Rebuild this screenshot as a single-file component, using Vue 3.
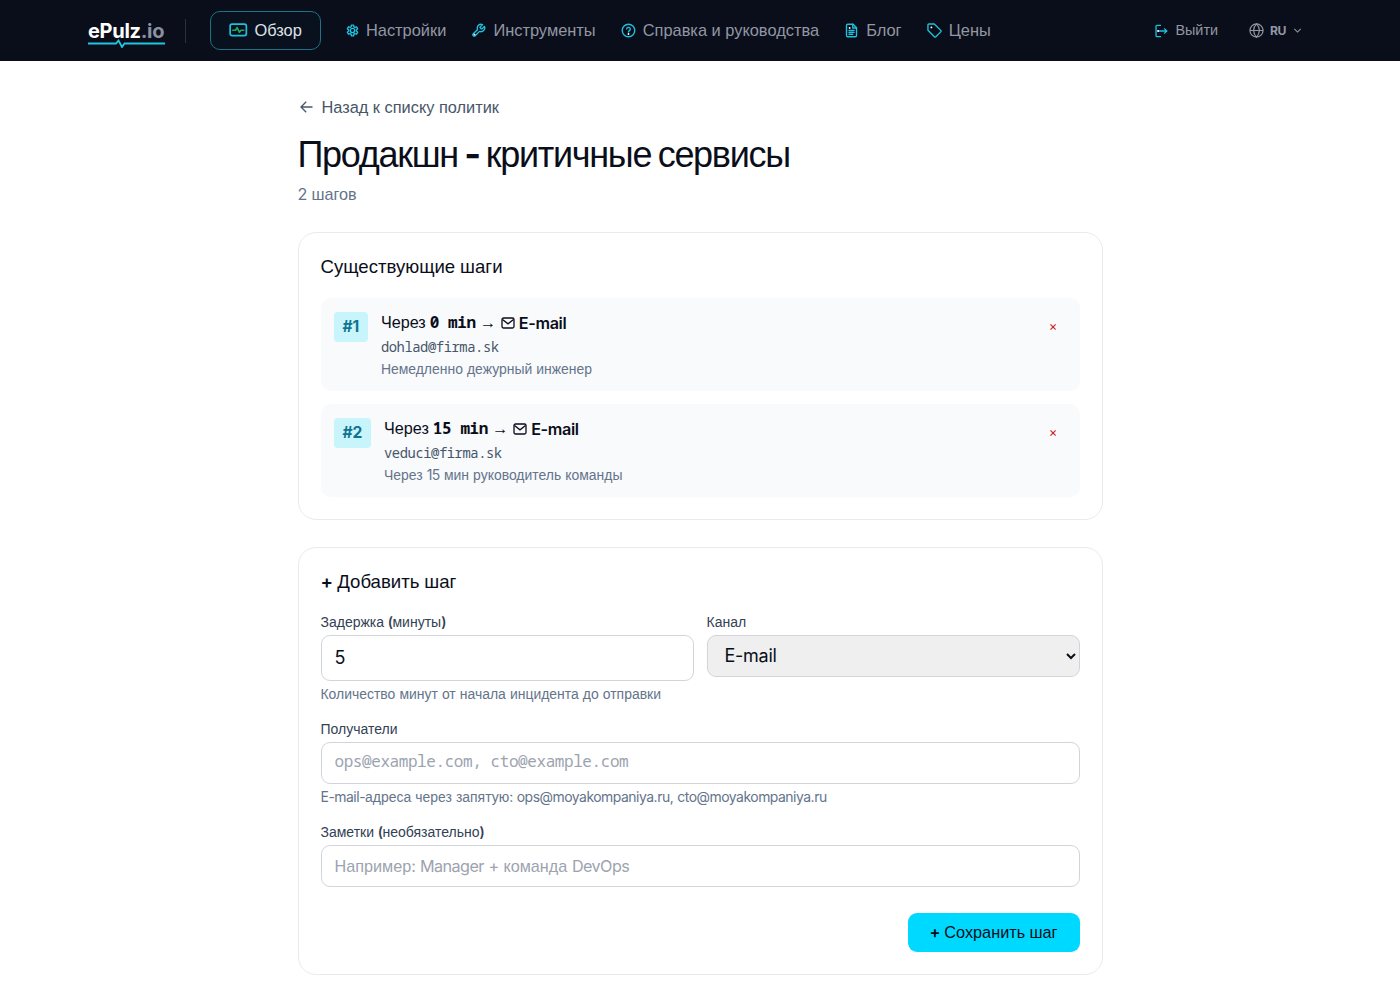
<template>
  <div class="page">
    <header class="topbar">
      <a class="logo" href="#">
        <span class="logo-text">ePulz<span class="logo-tld">.io</span></span>
        <svg class="logo-pulse" width="77" height="9" viewBox="0 0 77 9">
          <path d="M0 4.500H28L30.500 1.500L34 8L36.500 4.500H77" />
        </svg>
      </a>
      <span class="divider" />

      <nav class="nav">
        <a
          v-for="item in navItems"
          :key="item.id"
          href="#"
          class="nav-link"
          :class="['nav-' + item.id, { active: item.id === 'overview' }]"
        >
          <svg class="nav-icon" viewBox="0 0 24 24">
            <path v-for="d in item.paths" :key="d" :d="d" />
            <path v-if="item.pulse" class="pulse" :d="item.pulse" />
            <circle v-if="item.dot" class="dot" :cx="item.dot[0]" :cy="item.dot[1]" r="1.500" />
          </svg>
          <span class="nav-text">{{ item.label }}</span>
        </a>
      </nav>

      <div class="account">
        <a class="logout" href="#">
          <svg class="logout-icon" viewBox="0 0 24 24">
            <path d="M12 2.500H5A1.500 1.500 0 0 0 3.500 4v4.500M3.500 15.500V20A1.500 1.500 0 0 0 5 21.500h7M3.500 8.500v7" />
            <path d="M7 12h15M17.500 7.500L22 12l-4.500 4.500" />
            <circle class="dot" cx="7" cy="12" r="1.800" />
          </svg>
          <span class="nav-text">Выйти</span>
        </a>
        <button class="lang" type="button">
          <svg class="globe" viewBox="0 0 24 24">
            <circle cx="12" cy="12" r="10.500" />
            <path d="M1.500 12h21M12 1.500c3 3 4.600 6.500 4.600 10.500S15 19.500 12 22.500c-3-3-4.600-6.500-4.600-10.500S9 4.500 12 1.500z" />
          </svg>
          <span class="lang-code">RU</span>
          <svg class="chevron" viewBox="0 0 10 10"><path d="M1.500 3.200L5 6.700l3.500-3.500" /></svg>
        </button>
      </div>
    </header>

    <main class="content">
      <a class="back" href="#">
        <svg class="back-icon" viewBox="0 0 14 14"><path d="M12.500 7H1.200M6.200 1.800L1 7l5.200 5.200" /></svg>
        <span>Назад к списку политик</span>
      </a>
      <h1 class="title"><Txt text="Продакшн - критичные сервисы" /></h1>
      <p class="subtitle"><Txt text="2 шагов" /></p>

      <section class="card">
        <h2 class="card-title"><Txt text="Существующие шаги" /></h2>
        <ul class="steps">
          <li v-for="(step, i) in steps" :key="step.email" class="step">
            <span class="badge">#{{ i + 1 }}</span>
            <div class="step-body">
              <div class="step-head">
                <span class="cyr">Через</span>
                <span class="delay">{{ step.delay }} min</span>
                <span class="arrow">→</span>
                <svg class="mail" viewBox="0 0 14 12">
                  <rect x="1" y="1" width="12" height="10" rx="1.500" />
                  <path d="M1.500 2.500L7 6.800l5.500-4.300" />
                </svg>
                <span class="channel">E-mail</span>
              </div>
              <div class="email">{{ step.email }}</div>
              <div class="note"><Txt :text="step.note" /></div>
            </div>
            <button class="remove" type="button">×</button>
          </li>
        </ul>
      </section>

      <section class="card">
        <h2 class="card-title"><Txt text="+ Добавить шаг" /></h2>
        <form class="form" @submit.prevent>
          <div class="row">
            <div class="field">
              <label class="label" for="delay"><Txt text="Задержка (минуты)" /></label>
              <input id="delay" v-model="delay" class="control number" type="text" inputmode="numeric" />
              <p class="help"><Txt text="Количество минут от начала инцидента до отправки" /></p>
            </div>
            <div class="field">
              <label class="label" for="channel"><Txt text="Канал" /></label>
              <select id="channel" class="control select">
                <option>E-mail</option>
              </select>
            </div>
          </div>

          <div class="field">
            <label class="label" for="recipients"><Txt text="Получатели" /></label>
            <input
              id="recipients"
              v-model="recipients"
              class="control mono"
              type="text"
              placeholder="ops@example.com, cto@example.com"
            />
            <p class="help"><Txt text="E-mail-адреса через запятую: ops@moyakompaniya.ru, cto@moyakompaniya.ru" /></p>
          </div>

          <div class="field">
            <label class="label" for="notes"><Txt text="Заметки (необязательно)" /></label>
            <div class="stack">
              <input id="notes" v-model="notes" class="control" type="text" />
              <span v-if="!notes" class="hint"><Txt text="Например: Manager + команда DevOps" /></span>
            </div>
          </div>

          <div class="actions">
            <button class="save" type="submit"><Txt text="+ Сохранить шаг" /></button>
          </div>
        </form>
      </section>
    </main>
  </div>
</template>

<script setup>
import { h, ref } from 'vue'

// Кириллица рисуется своим шрифтом, всё остальное - Inter
const Txt = (props) =>
  props.text
    .split(/([\u0400-\u04FF]+)/)
    .filter(Boolean)
    .map((part) => h('span', { class: /[\u0400-\u04FF]/.test(part) ? 'cyr' : 'lat' }, part))
Txt.props = ['text']

const navItems = [
  {
    id: 'overview',
    label: 'Обзор',
    paths: ['M4 4h16a2.500 2.500 0 0 1 2.500 2.500v10a2.500 2.500 0 0 1-2.500 2.500h-16a2.500 2.500 0 0 1-2.500-2.500v-10a2.500 2.500 0 0 1 2.500-2.500z'],
    pulse: 'M5 12h3.500l2-3.500 3 6 2-2.500H19',
  },
  {
    id: 'settings',
    label: 'Настройки',
    paths: [
      'M12 8a4 4 0 1 0 0 8a4 4 0 0 0 0-8z',
      'M10 2h4l.6 3.200 1.800 1 3-1 2 3.400-2.300 2.300v2.200l2.300 2.300-2 3.400-3-1-1.800 1-.6 3.200h-4l-.6-3.200-1.800-1-3 1-2-3.400 2.300-2.300v-2.200L2.600 8.600l2-3.400 3 1 1.800-1z',
    ],
  },
  {
    id: 'tools',
    label: 'Инструменты',
    paths: [
      'M14.700 6.300a1 1 0 0 0 0 1.400l1.600 1.600a1 1 0 0 0 1.400 0l3.800-3.800a6 6 0 0 1-7.900 7.900l-6.900 6.900a2.100 2.100 0 0 1-3-3l6.900-6.900a6 6 0 0 1 7.900-7.900z',
    ],
    dot: [5.5, 18.5],
  },
  {
    id: 'guides',
    label: 'Справка и руководства',
    paths: [
      'M12 2a10 10 0 1 0 0 20a10 10 0 0 0 0-20z',
      'M9 9.300a3 3 0 0 1 5.900.8c0 2-2.900 2.300-2.900 4.200',
    ],
    dot: [12, 17.5],
  },
  {
    id: 'blog',
    label: 'Блог',
    paths: [
      'M14.500 2H6a2 2 0 0 0-2 2v16a2 2 0 0 0 2 2h12a2 2 0 0 0 2-2V7.500z',
      'M14 2v6h6M8 12h8M8 15h8M8 18h6',
    ],
    dot: [9, 8],
  },
  {
    id: 'pricing',
    label: 'Цены',
    paths: ['M1.500 3v8.700l10.300 10.300a1.700 1.700 0 0 0 2.400 0l7.800-7.800a1.700 1.700 0 0 0 0-2.400L11.700 1.500H3a1.500 1.500 0 0 0-1.500 1.500z'],
    dot: [7, 7],
  },
]

const steps = [
  { delay: 0, email: 'dohlad@firma.sk', note: 'Немедленно дежурный инженер' },
  { delay: 15, email: 'veduci@firma.sk', note: 'Через 15 мин руководитель команды' },
]

const delay = ref('5')
const recipients = ref('')
const notes = ref('')
</script>

<style>
body {
  margin: 0;
  background: #fff;
}

/* line-height: 1, чтобы разные шрифты не растягивали строку */
.cyr {
  font-family: "Liberation Sans", sans-serif;
  font-weight: 400;
  line-height: 1;
}

.lat {
  font-family: Inter, sans-serif;
  line-height: 1;
  letter-spacing: -0.035em;
  word-spacing: 0.045em;
}
</style>

<style scoped>
.page {
  font-family: Inter, "Liberation Sans", sans-serif;
  font-size: 16px;
  color: #0a0e1a;
  height: 984px;
  overflow: hidden;
}

.page * {
  box-sizing: border-box;
}

a {
  color: inherit;
  text-decoration: none;
}

svg {
  fill: none;
  stroke: currentColor;
  flex: none;
}

h1,
h2,
p,
ul {
  margin: 0;
  padding: 0;
}

/* Верхняя панель */
.topbar {
  display: flex;
  align-items: center;
  height: 61px;
  padding: 0 98px 0 88px;
  background: #0a0e1a;
}

.logo {
  display: flex;
  flex-direction: column;
  width: 77px;
}

.logo-text {
  font-size: 20px;
  line-height: 20px;
  font-weight: 700;
  color: #fff;
  white-space: nowrap;
  letter-spacing: -0.015em;
}

.logo-tld {
  color: #8b90a3;
}

.logo-pulse {
  margin-top: -2px;
  margin-bottom: -7px;
  stroke: #22c5e0;
  stroke-width: 1.8;
}

.divider {
  width: 1px;
  height: 24px;
  margin: 0 24px 0 20px;
  background: #2b303d;
}

.nav {
  display: flex;
  align-items: center;
  gap: 25.1px;
}

.nav-link {
  display: flex;
  align-items: center;
  gap: 7px;
  font-family: "Liberation Sans", sans-serif;
  font-size: 16.4px;
  line-height: 24px;
  color: #9297a3;
  white-space: nowrap;
}

.nav-text {
  padding-bottom: 2px;
}

.nav-icon {
  width: 15px;
  height: 15px;
  stroke: #1fc0dc;
  stroke-width: 2.2;
  stroke-linecap: round;
  stroke-linejoin: round;
}

.dot {
  fill: #fff;
  stroke: none;
}

.pulse {
  stroke: #22a565;
}

.nav-link.active {
  height: 39px;
  padding: 0 18px;
  border: 1px solid #1a7387;
  border-radius: 10px;
  background: #0a111e;
  color: #dfe2e8;
}

.active .nav-icon {
  width: 18.5px;
  height: 18.5px;
}

.nav-settings .nav-icon {
  width: 13px;
  height: 13px;
  stroke-width: 2.6;
}

.account {
  display: flex;
  align-items: center;
  margin-left: auto;
  gap: 31px;
}

.logout {
  display: flex;
  align-items: center;
  gap: 7px;
  font-family: "Liberation Sans", sans-serif;
  font-size: 14.4px;
  color: #9297a3;
}

.logout-icon {
  width: 14px;
  height: 14px;
  stroke: #1fc0dc;
  stroke-width: 2.2;
}

.lang {
  display: flex;
  align-items: center;
  gap: 6px;
  padding: 0;
  border: 0;
  background: none;
  color: #9297a3;
}

.globe {
  width: 15px;
  height: 15px;
  stroke-width: 1.9;
}

.lang-code {
  font-family: Inter, sans-serif;
  font-size: 12.2px;
  font-weight: 700;
  letter-spacing: -0.04em;
}

.chevron {
  width: 9px;
  height: 9px;
  margin-left: 1px;
  stroke-width: 1.2;
}

/* Содержимое */
.content {
  width: 805px;
  margin: 0 auto;
  padding-top: 34px;
}

.back {
  display: flex;
  align-items: center;
  gap: 8px;
  padding-left: 2px;
  height: 24px;
  font-family: "Liberation Sans", sans-serif;
  font-size: 16.35px;
  color: #475569;
}

.back-icon {
  width: 14px;
  height: 14px;
  stroke-width: 1.3;
}

.title {
  margin-top: 13px;
  font-size: 36px;
  line-height: 44px;
  font-weight: 700;
  letter-spacing: -0.036em;
}

.title :deep(.lat) {
  letter-spacing: -0.055em;
  word-spacing: 0;
}

.subtitle {
  margin-top: 6px;
  font-size: 16.2px;
  line-height: 24px;
  color: #64748b;
}

.card {
  margin-top: 26px;
  padding: 22px;
  border: 1px solid #e8eaed;
  border-radius: 18px;
  background: #fff;
}

.card + .card {
  margin-top: 27px;
}

.card-title {
  padding-bottom: 2px;
  font-size: 18.6px;
  line-height: 22px;
  font-weight: 600;
}

.steps {
  display: flex;
  flex-direction: column;
  gap: 13px;
  margin-top: 19px;
  list-style: none;
}

.step {
  display: flex;
  align-items: flex-start;
  gap: 13px;
  height: 93px;
  padding: 13px;
  border-radius: 10px;
  background: #f9fafc;
}

.badge {
  margin-top: 1px;
  padding: 0 9px;
  border-radius: 4px;
  background: #c8f4fc;
  color: #0e7490;
  font-size: 15.6px;
  line-height: 30px;
  font-weight: 700;
  letter-spacing: -0.015em;
}

.step-body {
  flex: 1;
}

.step-head {
  display: flex;
  align-items: center;
  gap: 4px;
  height: 24px;
  font-size: 16.2px;
  line-height: 24px;
  font-weight: 600;
}

.step-head .cyr {
  padding-bottom: 1px;
}

.delay {
  padding-bottom: 2px;
  font-family: "Noto Sans Mono", monospace;
  font-size: 16px;
  font-weight: 700;
  letter-spacing: -0.42px;
}

.arrow {
  padding-bottom: 2px;
  font-family: "Liberation Sans", sans-serif;
  font-weight: 400;
}

.channel {
  padding-bottom: 1px;
  letter-spacing: -0.022em;
}

.mail {
  width: 14px;
  height: 12px;
  margin-left: 1px;
  stroke-width: 1.3;
}

.email {
  margin-top: 1px;
  font-family: "Noto Sans Mono", monospace;
  font-size: 13.8px;
  line-height: 22px;
  letter-spacing: -0.43px;
  color: #475569;
}

.note {
  font-size: 13.95px;
  line-height: 22px;
  color: #64748b;
}

.remove {
  width: 27px;
  height: 29px;
  padding: 0;
  border: 0;
  background: none;
  color: #c81e1e;
  font-family: Inter, sans-serif;
  font-size: 13px;
}

/* Форма */
.form {
  display: flex;
  flex-direction: column;
  margin-top: 18px;
}

.row {
  display: grid;
  grid-template-columns: 1fr 1fr;
  gap: 13px;
}

.field {
  display: flex;
  flex-direction: column;
}

.label {
  margin-bottom: 3px;
  font-size: 14px;
  line-height: 20px;
  font-weight: 600;
  color: #334155;
}

.control {
  width: 100%;
  height: 42px;
  padding: 0 13px;
  border: 1px solid #d1d5db;
  border-radius: 9px;
  background: #fff;
  color: #0a0e1a;
  font-family: Inter, sans-serif;
  font-size: 16.2px;
}

.number {
  height: 46px;
  padding-bottom: 2px;
  font-size: 18px;
}

.select {
  padding-bottom: 1px;
  background: #efefef;
  font-size: 18px;
  letter-spacing: -0.015em;
}

.mono {
  padding-bottom: 4px;
  font-family: "Noto Sans Mono", monospace;
  font-size: 16px;
  letter-spacing: -0.42px;
}

.control::placeholder {
  color: #9ca3af;
}

.help {
  margin-top: 2px;
  margin-bottom: 15px;
  font-size: 13.95px;
  line-height: 21px;
  color: #64748b;
}

.stack {
  display: grid;
}

.stack > * {
  grid-area: 1 / 1;
}

.hint {
  align-self: center;
  padding-left: 14px;
  font-size: 16.2px;
  color: #9ca3af;
  pointer-events: none;
}

.actions {
  display: flex;
  justify-content: flex-end;
  margin-top: 26px;
}

.save {
  height: 39px;
  padding: 0 22px 1px;
  border: 0;
  border-radius: 9px;
  background: #00d9ff;
  color: #0a0e1a;
  font-family: Inter, sans-serif;
  font-size: 16.3px;
  font-weight: 600;
}
</style>
